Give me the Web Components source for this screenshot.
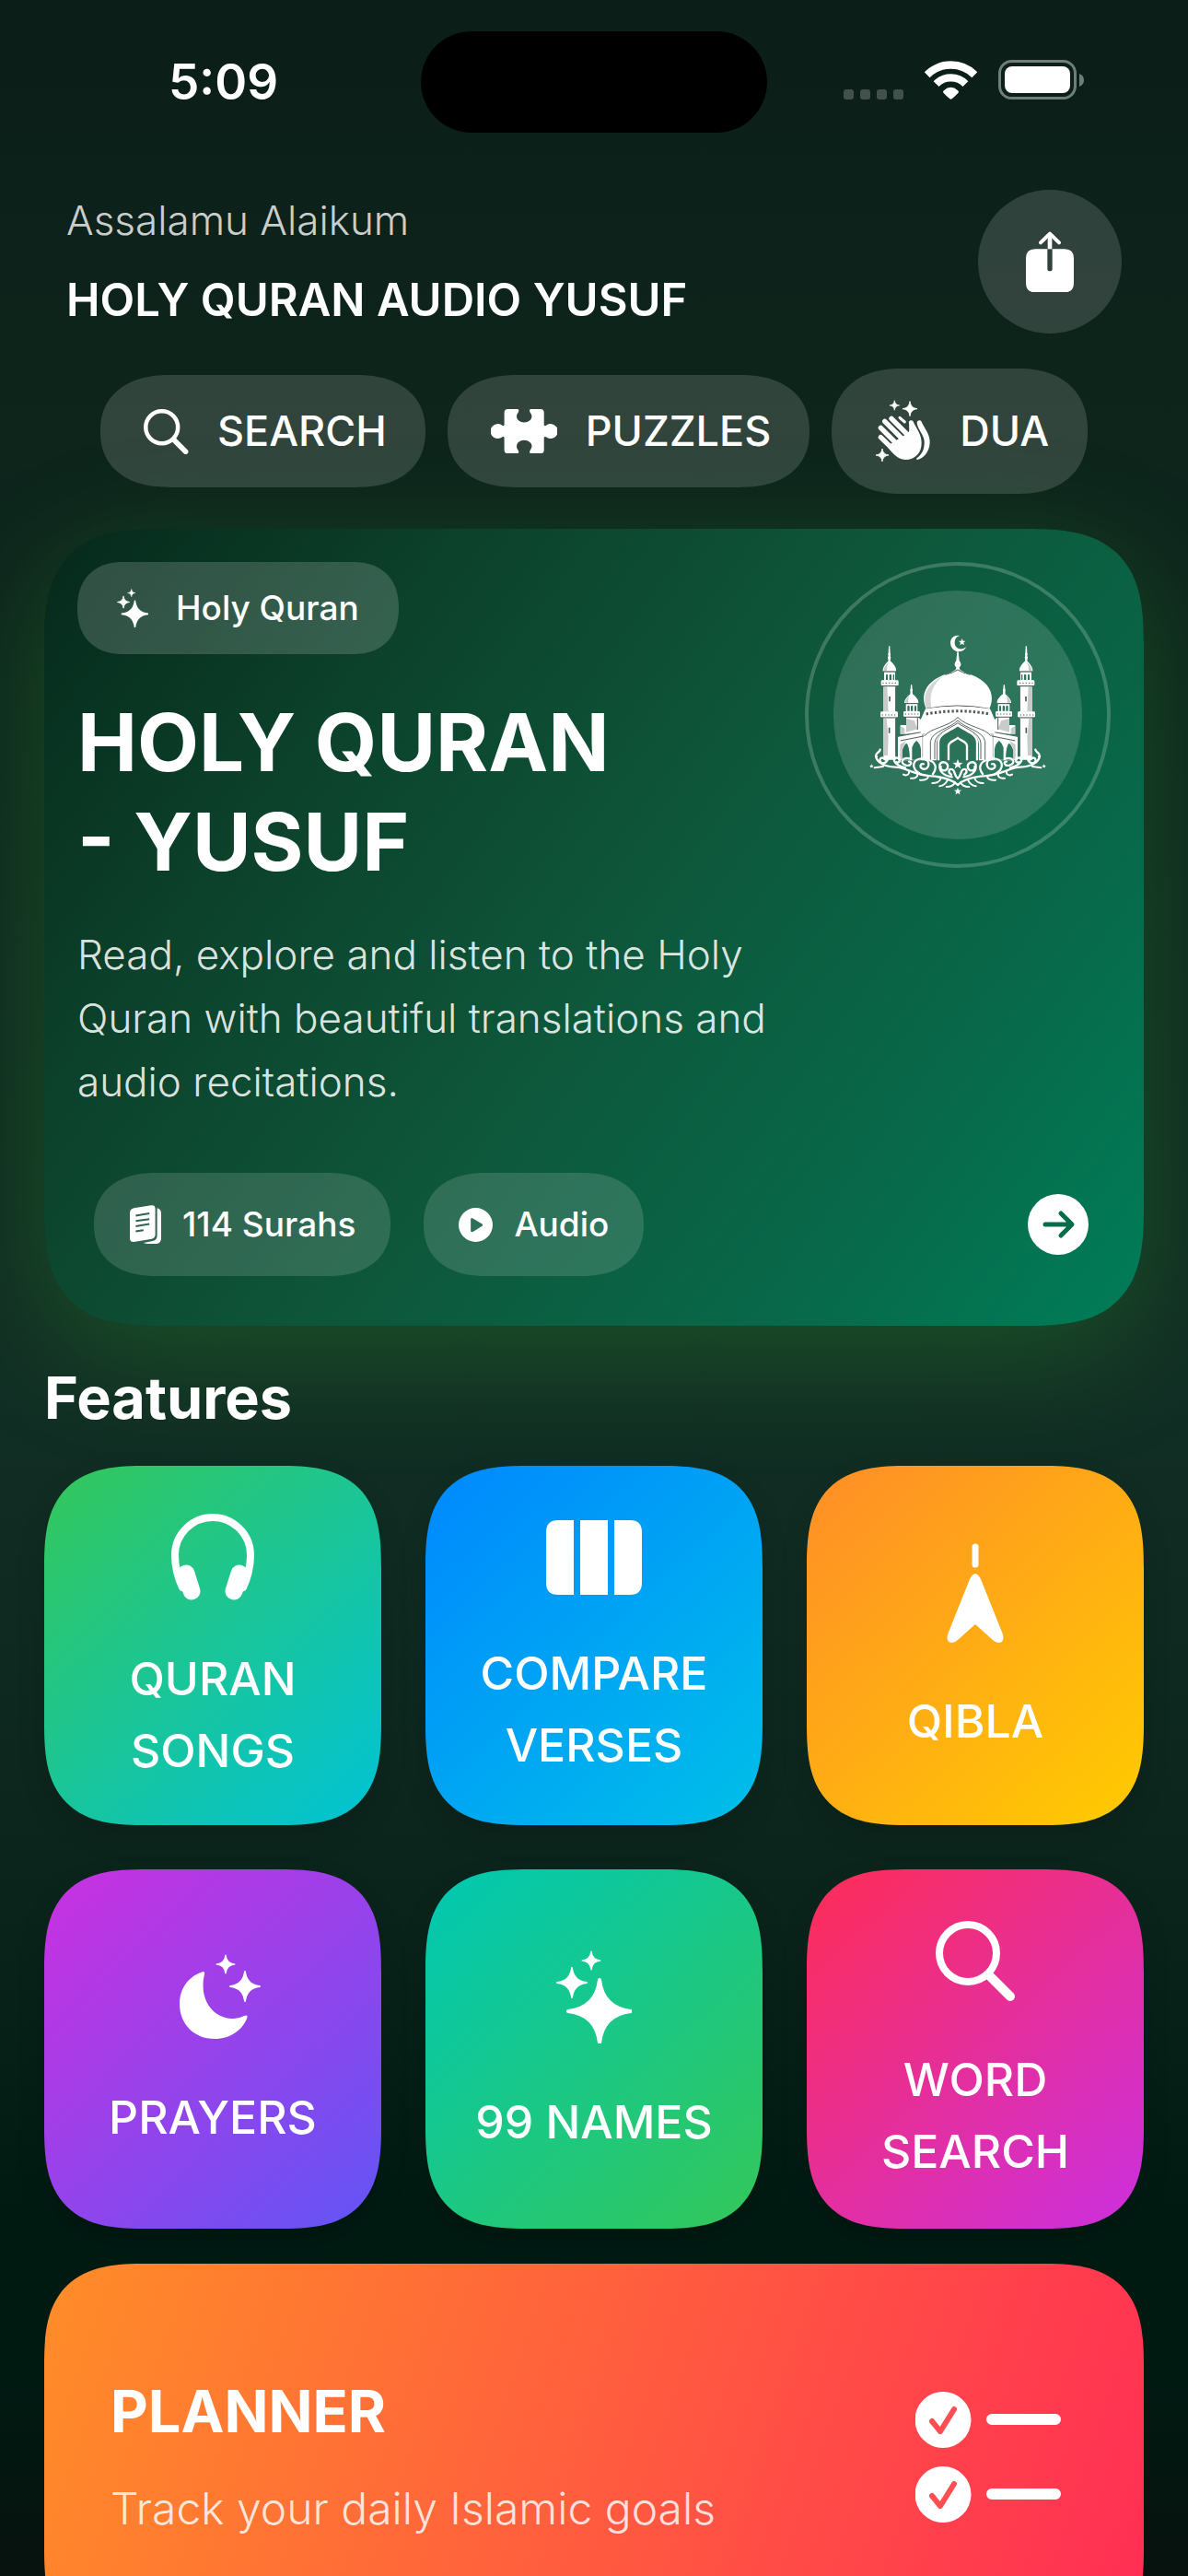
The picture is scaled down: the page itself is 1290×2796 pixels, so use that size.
<!DOCTYPE html>
<html lang="en">
<head>
<meta charset="utf-8">
<meta name="viewport" content="width=device-width, initial-scale=1">
<title>Holy Quran Audio Yusuf</title>
<style>
  body {
    margin: 0;
    font-family: Inter, "Liberation Sans", sans-serif;
    color: #fff;
    background: #0b1f18;
  }
</style>
</head>
<body>
<app-screen>
  <status-bar slot="status" time="5:09"></status-bar>

  <page-header>
    <span slot="greeting">Assalamu Alaikum</span>
    HOLY QURAN AUDIO YUSUF
  </page-header>

  <chip-row>
    <action-chip icon="search" size="49">SEARCH</action-chip>
    <action-chip icon="puzzle" size="72">PUZZLES</action-chip>
    <action-chip icon="hands" size="61">DUA</action-chip>
  </chip-row>

  <hero-card>
    <span slot="badge">Holy Quran</span>
    <span slot="title">HOLY QURAN<br>- YUSUF</span>
    <span slot="text">Read, explore and listen to the Holy Quran with beautiful translations and audio recitations.</span>
    <info-pill slot="pills" icon="pages" size="35">114 Surahs</info-pill>
    <info-pill slot="pills" icon="play" size="37">Audio</info-pill>
  </hero-card>

  <feature-grid>
    <span slot="title">Features</span>
    <feature-tile icon="headphones" size="90" style="--from: #34c759; --to: #00c3d6">QURAN SONGS</feature-tile>
    <feature-tile icon="columns" size="104" style="--from: #0088ff; --to: #00c0e8">COMPARE VERSES</feature-tile>
    <feature-tile icon="needle" size="62" style="--from: #ff8d28; --to: #ffcc00">QIBLA</feature-tile>
    <feature-tile icon="moon" size="104" style="--from: #cb30e0; --to: #6155f5">PRAYERS</feature-tile>
    <feature-tile icon="sparkles" size="82" style="--from: #00c8b3; --to: #34c759">99 NAMES</feature-tile>
    <feature-tile icon="search" size="87" style="--from: #ff2d55; --to: #cb30e0">WORD SEARCH</feature-tile>
  </feature-grid>

  <planner-card>
    <span slot="title">PLANNER</span>
    Track your daily Islamic goals
  </planner-card>
</app-screen>

<script>
// ===== ICONS =====
// four-pointed star with concave sides
function star(cx, cy, r) {
  const k = r * 0.2;
  const n = r * 0.07;
  return `<path stroke="currentColor" stroke-width="${r * 0.12}" stroke-linejoin="round" d="M${cx} ${cy - r}
    C${cx + n} ${cy - k * 2} ${cx + k * 2} ${cy - n} ${cx + r} ${cy}
    C${cx + k * 2} ${cy + n} ${cx + n} ${cy + k * 2} ${cx} ${cy + r}
    C${cx - n} ${cy + k * 2} ${cx - k * 2} ${cy + n} ${cx - r} ${cy}
    C${cx - k * 2} ${cy - n} ${cx - n} ${cy - k * 2} ${cx} ${cy - r}Z"/>`;
}

// five-pointed star
function star5(cx, cy, r) {
  const pts = [];
  for (let i = 0; i < 10; i++) {
    const a = Math.PI * (i / 5 - 0.5);
    const d = i % 2 ? r * 0.42 : r;
    pts.push(`${(cx + d * Math.cos(a)).toFixed(1)},${(cy + d * Math.sin(a)).toFixed(1)}`);
  }
  return `<polygon points="${pts.join(' ')}"/>`;
}

// left half of the mosque, mirrored for the right one
const mosqueSide = `
  <g fill="#fff">
    <path d="M318 320h4l2 46h-8z"/><circle cx="320" cy="346" r="4"/><circle cx="320" cy="357" r="5"/>
    <path d="M299 402C298 388 308 378 320 364C333 378 344 388 342 402Z"/>
    <path fill-rule="evenodd" d="M303 404H339V432H303ZM309 430V414q3-6 6 0V430ZM320 430V414q4-6 7 0V430ZM332 430V414q2-5 4 0V430Z"/>
    <rect x="293" y="431" width="57" height="18" rx="4"/>
    <path d="M301 450H341V534H301ZM301 552H341V690H301Z"/>
    <rect x="291" y="533" width="57" height="19" rx="4"/>
    <path d="M390 446h4l2 30h-8z"/><circle cx="392" cy="463" r="4"/>
    <path d="M369 506C369 492 380 484 392 473C405 484 416 492 415 506Z"/>
    <path fill-rule="evenodd" d="M374 508H412V533H374ZM379 531V516q4-5 7 0V531ZM390 531V516q4-5 7 0V531ZM402 531V516q3-5 6 0V531Z"/>
    <rect x="366" y="532" width="54" height="18" rx="4"/>
    <path d="M375 550H412L426 562V600L375 606Z"/>
    <path d="M356 577H375V606H356Z"/>
    <path fill-rule="evenodd" d="M348 614L440 596V692H348ZM362 690V660Q368 640 376 636Q386 644 387 690ZM394 690V650Q400 634 408 628Q420 636 423 655V690Z"/>
  </g>
  <g fill="#c9cbca">
    <path d="M301 452h12l4 80h-16zM301 556h10l6 60l-2 60h-14zM375 556l26 6l11 28l-37 10zM303 392q6-14 15-20q-8 14-6 30h-10zM372 498q6-12 14-17q-6 12-4 23h-10zM356 580l14 8v16h-14zM440 600l-14 6v84h14z"/>
    <path d="M355 640l20-12l-12 24v38h-8z"/>
  </g>
  <g fill="none" stroke="#4d5c55" stroke-width="3">
    <path d="M299 403H342M294 450H349M293 553H347M369 507H415M367 551H419M348 614L440 597M356 628L436 612"/>
    <path stroke-dasharray="4 6" d="M298 440H346M296 544H344M371 541H416"/>
    <path stroke-width="5" d="M321 484v16M320 585v18"/>
    <path d="M341 452v80M341 556v124M412 552v40"/>
  </g>
  <g fill="none" stroke="#fff" stroke-width="7" stroke-linecap="round">
    <path d="M279 680C270 670 292 664 290 657M276 679C282 704 305 712 340 714C380 716 400 742 470 744C500 748 528 756 543 772"/>
    <path d="M308 690C296 676 284 688 292 698C300 706 322 694 312 682"/>
    <path d="M372 716C330 706 328 680 346 684C360 688 352 702 344 698"/>
    <path d="M388 686C362 680 352 700 374 708C392 712 396 694 384 696"/>
    <path d="M424 738C384 716 398 684 430 686C456 690 452 724 430 720C414 714 424 700 432 704"/>
    <path d="M440 690C470 692 478 716 462 736"/>
    <path d="M484 706C492 690 514 700 510 716C504 732 482 724 488 712M484 708C482 728 498 742 524 746"/>
    <path d="M522 738C508 730 516 716 526 722C536 728 530 742 543 750"/>
    <path stroke-width="6" d="M300 712L272 716M366 738C378 744 386 736 384 728M390 750C402 752 414 746 412 736M420 756C434 758 448 752 446 744M460 766C474 766 486 760 488 750M484 776C500 774 506 764 510 756M506 778C522 778 530 772 534 764"/>
  </g>
  <g fill="#fff">${star5(262, 711, 7)}</g>
`;

const icons = {
  search: ['1016 2084 87 87', `
    <g fill="none" stroke="currentColor" stroke-linecap="round">
      <circle cx="1051" cy="2119" r="31" stroke-width="8"/>
      <path stroke-width="10" d="M1074 2143L1097 2166"/>
    </g>`],
  puzzle: ['38 101 217 145', `
    <path d="M94 101H124C131 101 130 108 127 113C120 121 122 130 126 136C136 148 158 148 168 136C173 129 174 121 167 113
      C164 108 163 101 170 101H200Q212 101 212 113V151C212 158 217 157 221 153A24 24 0 1 1 221 194C217 190 212 190 212 196V234Q212 246 200 246
      H170C163 246 164 240 167 235C174 226 173 218 168 212C158 200 136 200 126 212C122 218 120 226 127 235C130 240 131 246 124 246
      H94Q82 246 82 234V196C82 190 77 190 73 194A24 24 0 1 1 73 153C77 157 82 158 82 151V113Q82 101 94 101Z"/>`],
  hands: ['1297 67 183 204', `
    ${star(1361, 85, 16)}${star(1411, 96, 24)}${star(1321, 247, 21)}
    <g fill="none" stroke="currentColor" stroke-linecap="round" stroke-width="16">
      <path d="M1316 158L1372 214M1329 137L1390 198M1351 128L1410 187M1316 189L1356 228"/>
      <path stroke-width="9" d="M1378 125L1394 139"/>
      <path stroke-width="15" d="M1415 141L1424 182"/>
    </g>
    <path d="M1410 146C1406 158 1412 168 1406 174L1336 218C1352 238 1370 262 1396 262C1428 262 1450 240 1449 205C1448 178 1432 160 1421 137Z"/>
    <path d="M1434 142C1434 134 1444 131 1449 138C1458 160 1477 178 1476 206C1475 240 1452 259 1436 262C1432 262 1431 259 1434 256C1452 243 1459 226 1458 201C1456 180 1437 164 1434 142Z"/>`],
  share: ['642 605 156 200', `
    <path fill-rule="evenodd" d="M672 663H712V728Q712 735 720 735Q728 735 728 728V663H768Q798 663 798 693V774Q798 804 768 804H672Q642 804 642 774V693Q642 663 672 663Z"/>
    <path fill="none" stroke="currentColor" stroke-width="12" stroke-linecap="round" stroke-linejoin="round" d="M690 642L720 613L750 642"/>
    <path d="M713 614h14v49h-14z"/>`],
  sparkles: ['604 2116 82 101', `${star(651, 2182, 34)}${star(621, 2151, 16)}${star(642, 2127, 10)}`],
  pages: ['125 137 104 125', `
    <mask id="rows">
      <rect x="120" y="130" width="120" height="140" fill="#fff"/>
      <path stroke="#000" stroke-width="6" d="M147 171L191 164M147 188L191 182M147 205L191 198M147 222L172 218"/>
    </mask>
    <path mask="url(#rows)" d="M141 147L197 138Q209 136 210 148V233Q210 243 199 246L141 256Q128 257 128 244V162Q128 150 141 147Z"/>
    <path d="M216 147Q229 150 229 164V244Q229 260 214 262H186Q174 261 172 259L202 253Q216 250 216 236Z"/>`],
  play: ['1209 141 110 110', `
    <path fill-rule="evenodd" d="M1264 141a55 55 0 1 1 0 110a55 55 0 1 1 0-110ZM1248 178V214Q1248 222 1255 218L1285 200Q1289 196 1285 193L1255 175Q1248 171 1248 178Z"/>`],
  arrow: ['0 0 66 66', `
    <circle cx="33" cy="33" r="33"/>
    <path fill="none" stroke="#076c4a" stroke-width="5" stroke-linecap="round" stroke-linejoin="round" d="M19 33H47M36 21L48 33L36 45"/>`],
  headphones: ['186 1642 90 94', `
    <g fill="none" stroke="currentColor" stroke-linecap="round">
      <path stroke-width="8" d="M198 1722Q190 1705 190 1687A41 41 0 0 1 272 1687Q272 1705 264 1722"/>
      <path stroke-width="19" d="M202 1707L208 1726M260 1707L254 1726"/>
    </g>`],
  columns: ['0 0 104 81', `
    <path d="M13 0H30V81H13Q0 81 0 68V13Q0 0 13 0ZM37 0H67V81H37ZM74 0H91Q104 0 104 13V68Q104 81 91 81H74Z"/>`],
  needle: ['0 0 62 108', `
    <path stroke="currentColor" stroke-width="7" stroke-linecap="round" d="M31 4V23"/>
    <path d="M25 39Q31 27 37 39L61 99Q63 108 56 108Q53 108 50 105L31 88L12 105Q9 108 6 108Q-1 108 1 99Z"/>`],
  moon: ['179 2120 104 92', `
    <path d="M218 2140Q223 2137 222 2142C216 2167 229 2189 252 2190Q260 2190 265 2187Q270 2185 268 2190C263 2203 249 2212 233 2212C211 2212 195 2196 195 2174C195 2158 204 2145 218 2140Z"/>
    ${star(245, 2131, 10)}${star(266, 2155, 16)}`],
  checklist: ['0 0 158 142', `
    <path fill-rule="evenodd" d="M30 0a30 30 0 1 1 0 61a30 30 0 1 1 0-61ZM30 81a30 30 0 1 1 0 61a30 30 0 1 1 0-61Z"/>
    <g fill="none" stroke-linecap="round" stroke-linejoin="round">
      <path stroke="currentColor" stroke-width="12" d="M83 30H152M83 111H152"/>
      <path stroke="#ff4f52" stroke-width="6" d="M18 32L27 43L42 19M18 113L27 124L42 100"/>
    </g>`],
  wifi: ['312 45 172 126', `
    <g fill="none" stroke="currentColor" stroke-width="25">
      <path d="M320 91A110 110 0 0 1 476 91"/>
      <path d="M350 121A67 67 0 0 1 446 121"/>
    </g>
    <path d="M398 171Q394 171 373 149Q371 145 375 142Q398 122 421 142Q425 145 423 149Q402 171 398 171Z"/>`],
  battery: ['0 0 94 43', `
    <rect x="1.500" y="1.500" width="82" height="40" rx="13" fill="none" stroke="#6f7f78" stroke-width="3"/>
    <rect x="7" y="7" width="71" height="29" rx="8"/>
    <path fill="#6f7f78" d="M88 15q5 2 5 7t-5 7z"/>`],
  signal: ['0 0 65 11', `
    <g opacity=".22"><rect width="11" height="11" rx="3"/><rect x="18" width="11" height="11" rx="3"/><rect x="36" width="11" height="11" rx="3"/><rect x="54" width="11" height="11" rx="3"/></g>`],
  mosque: ['255 283 576 525', `
    ${mosqueSide}
    <g transform="translate(1086 0) scale(-1 1)">${mosqueSide}</g>
    <path d="M549 286C525 280 513 304 522 322C532 344 562 342 571 322C556 336 534 328 533 310C532 298 538 289 549 286Z"/>
    ${star5(557, 307, 12)}
    <path d="M541 338H545L548 366L553 380L548 388L550 398H536L538 388L533 380L538 366Z"/>
    <circle cx="543" cy="379" r="10"/>
    <path d="M440 524C420 480 438 436 500 413Q526 406 543 392Q560 406 586 413C648 436 666 480 646 524Z"/>
    <path fill="#d4d6d5" d="M441 522C424 480 446 440 498 416C460 444 448 480 458 522Z"/>
    <path fill="none" stroke="#4d5c55" stroke-width="3" d="M502 413Q530 406 543 397Q556 406 584 413M440 524Q543 504 646 524M425 558Q543 528 661 558"/>
    <path d="M438 524Q543 508 648 524L664 560V604H422V560Z"/>
    <path fill="none" stroke="#4d5c55" stroke-width="9" stroke-dasharray="7 7" d="M440 541Q543 522 648 541"/>
    <path fill-rule="evenodd" d="M430 692V620C436 586 512 580 543 548C574 580 650 586 656 620V692H612V640C612 606 572 588 543 572C514 588 474 606 474 640V692Z"/>
    <path fill="#2a7358" d="M486 692V632C488 604 526 596 543 580C560 596 598 604 600 632V692Z"/>
    <g fill="none" stroke="#fff" stroke-width="7"><path d="M480 692V634C480 604 524 592 543 577C562 592 606 604 606 634V692M513 692V645C514 630 534 628 543 619C552 628 572 630 573 645V692"/></g>
    <g fill="none" stroke="#59665f" stroke-width="3"><path d="M436 612C450 588 515 582 543 552C571 582 636 588 650 612M468 688V636C470 602 520 588 543 570C566 588 616 602 618 636V688M454 690V630C460 596 515 590 543 562C571 590 626 596 632 630V690"/></g>
    ${star5(543, 705, 17)}${star5(543, 793, 13)}`]
};

class AppIcon extends HTMLElement {
  constructor() {
    super();
    this.attachShadow({ mode: 'open' });
  }

  connectedCallback() {
    const [box, shapes] = icons[this.getAttribute('name')];
    this.shadowRoot.innerHTML = `
      <style>
        :host { display: block; flex: none; width: ${this.getAttribute('size')}px; }
        svg { display: block; width: 100%; height: auto; }
      </style>
      <svg viewBox="${box}" fill="currentColor" aria-hidden="true">${shapes}</svg>
    `;
  }
}

// ===== SCREEN =====
class AppScreen extends HTMLElement {
  constructor() {
    super();
    this.attachShadow({ mode: 'open' }).innerHTML = `
      <style>
        :host {
          display: flex;
          flex-direction: column;
          height: 100vh;
          background: linear-gradient(#0b1e18 0%, #0d241b 14%, #122f25 54%, #0b241b 74%, #001a12 86%, #001a12 92%, #08120f 100%);
        }
        main {
          flex: 1;
          min-height: 0;
          overflow-y: auto;
          scrollbar-width: none;
          display: flex;
          flex-direction: column;
          gap: 38px;
          padding: 30px 48px 48px;
        }
      </style>
      <slot name="status"></slot>
      <main><slot></slot></main>
    `;
  }
}

class StatusBar extends HTMLElement {
  constructor() {
    super();
    this.attachShadow({ mode: 'open' });
  }

  connectedCallback() {
    this.shadowRoot.innerHTML = `
      <style>
        :host {
          display: grid;
          grid-template-columns: 1fr 376px 1fr;
          align-items: center;
          flex: none;
          padding-top: 34px;
          margin-bottom: 32px;
        }
        time {
          justify-self: center;
          padding-left: 28px;
          font-size: 53px;
          line-height: 64px;
          font-weight: 600;
        }
        .island { height: 110px; border-radius: 55px; background: #000; }
        .right {
          display: flex;
          align-items: flex-end;
          justify-content: center;
          gap: 23px;
          padding: 0 30px 6px 0;
        }
      </style>
      <time>${this.getAttribute('time')}</time>
      <div class="island"></div>
      <div class="right">
        <app-icon name="signal" size="65"></app-icon>
        <app-icon name="wifi" size="57"></app-icon>
        <app-icon name="battery" size="94"></app-icon>
      </div>
    `;
  }
}

class PageHeader extends HTMLElement {
  constructor() {
    super();
    this.attachShadow({ mode: 'open' }).innerHTML = `
      <style>
        :host {
          display: flex;
          align-items: center;
          justify-content: space-between;
          padding: 0 24px;
        }
        .text { display: grid; gap: 30px; }
        p, h1 { margin: 0; }
        p { font-size: 44px; line-height: 54px; font-weight: 350; color: rgba(255, 255, 255, .78); }
        h1 { font-size: 49px; line-height: 60px; font-weight: 600; }
        button {
          display: grid;
          place-items: center;
          width: 156px;
          height: 156px;
          padding: 0;
          border: 0;
          border-radius: 50%;
          color: #fff;
          background: rgba(255, 255, 255, .15);
        }
      </style>
      <div class="text">
        <p><slot name="greeting"></slot></p>
        <h1><slot></slot></h1>
      </div>
      <button type="button" aria-label="Share"><app-icon name="share" size="52"></app-icon></button>
    `;
  }
}

// ===== CHIPS =====
class ChipRow extends HTMLElement {
  constructor() {
    super();
    this.attachShadow({ mode: 'open' }).innerHTML = `
      <style>
        :host { display: flex; justify-content: center; align-items: center; gap: 24px; }
      </style>
      <slot></slot>
    `;
  }
}

class ActionChip extends HTMLElement {
  constructor() {
    super();
    this.attachShadow({ mode: 'open' });
  }

  connectedCallback() {
    this.shadowRoot.innerHTML = `
      <style>
        :host { display: block; }
        button {
          display: flex;
          align-items: center;
          gap: 31px;
          padding: 34px 42px 34px 47px;
          border: 0;
          border-radius: 69px;
          font: 500 45px/54px Inter, "Liberation Sans", sans-serif;
          color: #fff;
          background: rgba(255, 255, 255, .15);
        }
        @supports (corner-shape: squircle) {
          button { border-radius: 76px / 50%; corner-shape: superellipse(1.2); }
        }
      </style>
      <button type="button">
        <app-icon name="${this.getAttribute('icon')}" size="${this.getAttribute('size')}"></app-icon>
        <slot></slot>
      </button>
    `;
  }
}

// ===== HERO =====
class HeroCard extends HTMLElement {
  constructor() {
    super();
    this.attachShadow({ mode: 'open' }).innerHTML = `
      <style>
        :host {
          display: block;
          padding: 36px;
          border-radius: 96px;
          background: linear-gradient(126deg, #06291b 0%, #0c412b 25%, #0e573b 52%, #086849 77%, #007d57 100%);
          box-shadow: 0 30px 120px rgba(48, 150, 48, .34);
        }
        @supports (corner-shape: squircle) {
          :host { border-radius: 128px; corner-shape: superellipse(1.5); }
          .badge { border-radius: 64px / 50%; corner-shape: superellipse(1.2); }
        }
        .top { display: flex; justify-content: space-between; gap: 24px; }
        .copy { flex: 1; display: flex; flex-direction: column; align-items: flex-start; }
        .badge {
          display: flex;
          align-items: center;
          gap: 30px;
          padding: 28px 43px;
          border-radius: 50px;
          font-size: 37px;
          line-height: 44px;
          font-weight: 500;
          background: rgba(255, 255, 255, .17);
        }
        h2 { margin: 42px 0 34px; font-size: 87px; line-height: 108px; font-weight: 700; }
        p { margin: 0; font-size: 44px; line-height: 69px; color: rgba(255, 255, 255, .87); font-weight: 350; }
        .ring {
          flex: none;
          box-sizing: border-box;
          width: 332px;
          height: 332px;
          padding: 27px;
          border: 4px solid rgba(255, 255, 255, .2);
          border-radius: 50%;
        }
        .disc {
          display: grid;
          place-items: center;
          height: 100%;
          border-radius: 50%;
          background: rgba(255, 255, 255, .14);
        }
        .actions { display: flex; align-items: center; gap: 36px; padding: 64px 24px 18px 18px; }
        button { margin-left: auto; padding: 0; border: 0; color: #fff; background: none; }
      </style>
      <div class="top">
        <div class="copy">
          <div class="badge"><app-icon name="sparkles" size="34"></app-icon><slot name="badge"></slot></div>
          <h2><slot name="title"></slot></h2>
          <p><slot name="text"></slot></p>
        </div>
        <div class="ring"><div class="disc"><app-icon name="mosque" size="192"></app-icon></div></div>
      </div>
      <div class="actions">
        <slot name="pills"></slot>
        <button type="button" aria-label="Open"><app-icon name="arrow" size="66"></app-icon></button>
      </div>
    `;
  }
}

class InfoPill extends HTMLElement {
  constructor() {
    super();
    this.attachShadow({ mode: 'open' });
  }

  connectedCallback() {
    this.shadowRoot.innerHTML = `
      <style>
        :host {
          display: flex;
          align-items: center;
          gap: 23px;
          padding: 34px 38px;
          border-radius: 56px;
          font-size: 37px;
          line-height: 44px;
          font-weight: 500;
          background: rgba(255, 255, 255, .14);
        }
        @supports (corner-shape: squircle) {
          :host { border-radius: 68px / 50%; corner-shape: superellipse(1.2); }
        }
      </style>
      <app-icon name="${this.getAttribute('icon')}" size="${this.getAttribute('size')}"></app-icon>
      <slot></slot>
    `;
  }
}

// ===== FEATURES =====
class FeatureGrid extends HTMLElement {
  constructor() {
    super();
    this.attachShadow({ mode: 'open' }).innerHTML = `
      <style>
        :host { display: block; }
        h2 { margin: 0 0 34px; font-size: 63px; line-height: 80px; font-weight: 700; }
        .grid { display: grid; grid-template-columns: repeat(3, 1fr); grid-auto-rows: 390px; gap: 48px; }
      </style>
      <h2><slot name="title"></slot></h2>
      <div class="grid"><slot></slot></div>
    `;
  }
}

class FeatureTile extends HTMLElement {
  constructor() {
    super();
    this.attachShadow({ mode: 'open' });
  }

  connectedCallback() {
    this.shadowRoot.innerHTML = `
      <style>
        :host { display: block; }
        button {
          display: flex;
          flex-direction: column;
          align-items: center;
          justify-content: center;
          gap: 36px;
          width: 100%;
          height: 100%;
          padding: 0 36px;
          border: 0;
          border-radius: 84px;
          font: 500 50px/78px Inter, "Liberation Sans", sans-serif;
          color: #fff;
          background: linear-gradient(137deg, var(--from), var(--to));
          box-shadow: 0 12px 30px rgba(0, 0, 0, .15);
        }
        @supports (corner-shape: squircle) {
          button { border-radius: 112px; corner-shape: superellipse(1.5); }
        }
        app-icon { padding: 10px 0; }
      </style>
      <button type="button">
        <app-icon name="${this.getAttribute('icon')}" size="${this.getAttribute('size')}"></app-icon>
        <span><slot></slot></span>
      </button>
    `;
  }
}

// ===== PLANNER =====
class PlannerCard extends HTMLElement {
  constructor() {
    super();
    this.attachShadow({ mode: 'open' }).innerHTML = `
      <style>
        :host {
          display: flex;
          flex: none;
          align-items: center;
          justify-content: space-between;
          box-sizing: border-box;
          min-height: 420px;
          padding: 72px 90px 72px 72px;
          border-radius: 84px;
          background: linear-gradient(109deg, #ff8d28, #ff2d55);
        }
        @supports (corner-shape: squircle) {
          :host { border-radius: 112px; corner-shape: superellipse(1.5); }
        }
        h2, p { margin: 0; }
        h2 { margin-bottom: 36px; font-size: 63px; line-height: 76px; font-weight: 700; }
        p { font-size: 48px; line-height: 64px; font-weight: 350; color: rgba(255, 255, 255, .82); }
      </style>
      <div>
        <h2><slot name="title"></slot></h2>
        <p><slot></slot></p>
      </div>
      <app-icon name="checklist" size="158"></app-icon>
    `;
  }
}

customElements.define('app-icon', AppIcon);
customElements.define('app-screen', AppScreen);
customElements.define('status-bar', StatusBar);
customElements.define('page-header', PageHeader);
customElements.define('chip-row', ChipRow);
customElements.define('action-chip', ActionChip);
customElements.define('hero-card', HeroCard);
customElements.define('info-pill', InfoPill);
customElements.define('feature-grid', FeatureGrid);
customElements.define('feature-tile', FeatureTile);
customElements.define('planner-card', PlannerCard);
</script>
</body>
</html>
